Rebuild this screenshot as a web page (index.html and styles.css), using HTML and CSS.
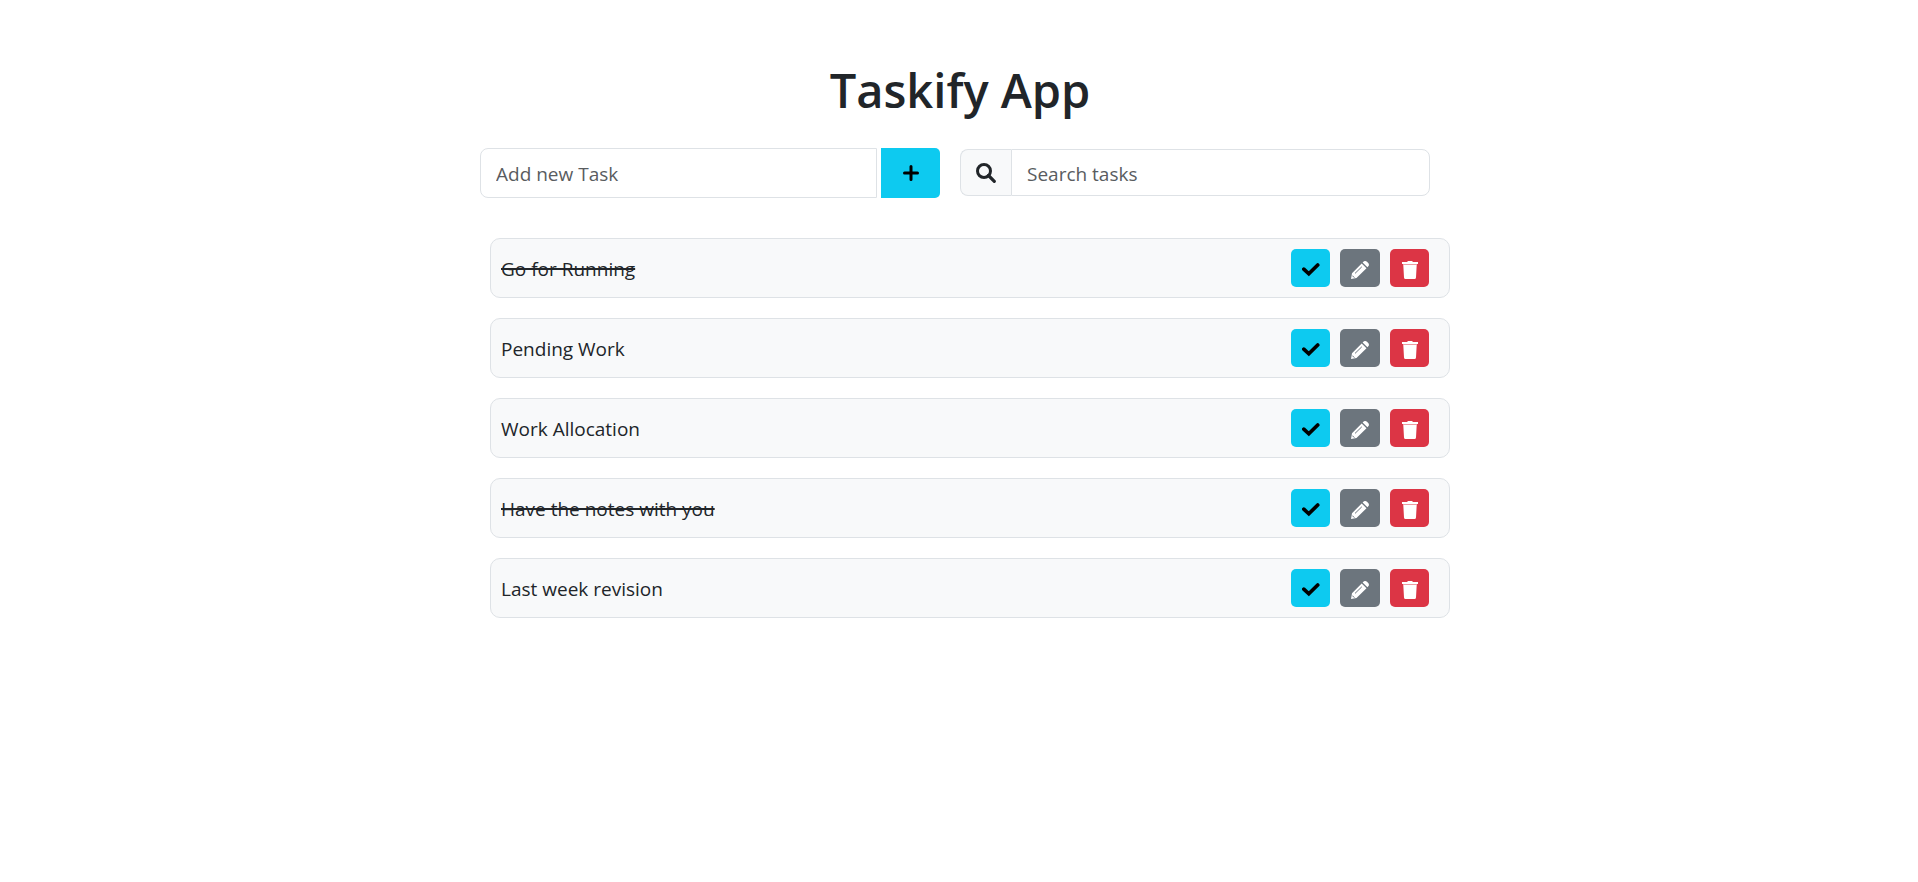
FILE: index.html
```html
<!DOCTYPE html>
<html lang="en">
<head>
<meta charset="utf-8">
<title>Taskify App</title>
<link rel="stylesheet" href="styles.css">
</head>
<body>
<svg class="sprite" aria-hidden="true">
  <symbol id="check" viewBox="0 0 18 18"><path d="M1.800 8.200 6.800 12.800 15.700 4" fill="none" stroke="currentColor" stroke-width="3.700" stroke-linecap="round"/></symbol>
  <symbol id="pencil" viewBox="0 0 18 18"><path fill="currentColor" d="M11.600 1.600 13 .3Q14.500-.5 16 .8L17.200 2Q18.500 3.500 17.500 5L16.400 6.200ZM10.700 2.500 15.500 7.300 5.500 17 0 18 1 12.200Z"/><path d="M4 12.400 10.800 5.800M1.300 14.600 3.400 16.700" fill="none" stroke="#6c757d" stroke-width="1"/></symbol>
  <symbol id="trash" viewBox="0 0 18 18"><path fill="currentColor" d="M1 1H6L7 0H11L12 1H17V3H1ZM2.300 4H15.700L15 16.500Q14.900 18 13.500 18H4.500Q3.100 18 3 16.500Z"/><path fill="currentColor" opacity=".5" d="M2 3H16V4H2Z"/></symbol>
</svg>
<main class="app">
  <h1 class="title">Taskify App</h1>
  <div class="toolbar">
    <form class="add">
      <input class="field add-field" type="text" placeholder="Add new Task" aria-label="Add new Task">
      <button class="add-button" type="button" aria-label="Add task"><svg class="icon" viewBox="0 0 18 18"><path d="M9 2.500V15.500M2.500 9H15.500" fill="none" stroke="currentColor" stroke-width="3" stroke-linecap="round"/></svg></button>
    </form>
    <form class="search">
      <label class="search-label" for="search" aria-label="Search"><svg class="search-icon" viewBox="0 0 20 20"><circle cx="8" cy="8" r="6.500" fill="none" stroke="currentColor" stroke-width="3"/><path d="M12.500 12.500 18.300 18.300" stroke="currentColor" stroke-width="3.200" stroke-linecap="round"/></svg></label>
      <input class="field search-field" id="search" type="text" placeholder="Search tasks">
    </form>
  </div>
  <ul class="tasks">
    <li class="task"><span class="name done">Go for Running</span><div class="actions"><button class="action check" aria-label="Complete"><svg class="icon"><use href="#check"/></svg></button><button class="action edit" aria-label="Edit"><svg class="icon"><use href="#pencil"/></svg></button><button class="action delete" aria-label="Delete"><svg class="icon"><use href="#trash"/></svg></button></div></li>
    <li class="task"><span class="name">Pending Work</span><div class="actions"><button class="action check" aria-label="Complete"><svg class="icon"><use href="#check"/></svg></button><button class="action edit" aria-label="Edit"><svg class="icon"><use href="#pencil"/></svg></button><button class="action delete" aria-label="Delete"><svg class="icon"><use href="#trash"/></svg></button></div></li>
    <li class="task"><span class="name">Work Allocation</span><div class="actions"><button class="action check" aria-label="Complete"><svg class="icon"><use href="#check"/></svg></button><button class="action edit" aria-label="Edit"><svg class="icon"><use href="#pencil"/></svg></button><button class="action delete" aria-label="Delete"><svg class="icon"><use href="#trash"/></svg></button></div></li>
    <li class="task"><span class="name done">Have the notes with you</span><div class="actions"><button class="action check" aria-label="Complete"><svg class="icon"><use href="#check"/></svg></button><button class="action edit" aria-label="Edit"><svg class="icon"><use href="#pencil"/></svg></button><button class="action delete" aria-label="Delete"><svg class="icon"><use href="#trash"/></svg></button></div></li>
    <li class="task"><span class="name">Last week revision</span><div class="actions"><button class="action check" aria-label="Complete"><svg class="icon"><use href="#check"/></svg></button><button class="action edit" aria-label="Edit"><svg class="icon"><use href="#pencil"/></svg></button><button class="action delete" aria-label="Delete"><svg class="icon"><use href="#trash"/></svg></button></div></li>
  </ul>
</main>
</body>
</html>
```
FILE: styles.css
```css
* { box-sizing: border-box; }
body { margin: 0; padding-left: 2px; background: #fff; color: #212529; font: 19px/30px "Segoe UI", "Open Sans", sans-serif; }
.sprite { display: none; }
.app { width: calc(50% + 2px); margin: 0 auto; padding-top: 60px; }
.title { margin: 0 0 28px; font-size: 47px; line-height: 60px; font-weight: 600; text-align: center; }
.toolbar { display: grid; grid-template-columns: 1fr 1fr; align-items: start; margin-bottom: 40px; }
.add { display: flex; gap: 4px; padding-right: 20px; }
.search { display: flex; padding: 1px 10px 0 0; }
.field { flex: 1; min-width: 0; height: 50px; padding: 1px 15px 0; border: 1px solid #dee2e6; background: #fff; color: #212529; font: inherit; }
.field::placeholder { color: #595c5f; opacity: 1; }
.add-field { border-radius: 8px 0 0 8px; }
.add-button { display: flex; align-items: center; justify-content: center; width: 59px; padding: 0; border: 0; border-radius: 0 5px 5px 0; background: #0dcaf0; color: #000; }
.search-label { display: flex; align-items: center; justify-content: center; width: 51px; border: 1px solid #dee2e6; border-right: 0; border-radius: 8px 0 0 8px; background: #f8f9fa; }
.search-field { height: 47px; padding-top: 2px; border-radius: 0 8px 8px 0; }
.icon { display: block; width: 18px; height: 18px; }
.search-icon { display: block; width: 20px; height: 20px; }
.tasks { display: grid; gap: 20px; margin: 0 -10px 0 10px; padding: 0; list-style: none; }
.task { display: flex; align-items: center; justify-content: space-between; min-height: 60px; padding: 0 20px 0 10px; border: 1px solid #dee2e6; border-radius: 10px; background: #f8f9fa; }
.name { padding-top: 2px; }
.done { text-decoration: line-through; text-decoration-thickness: 2px; }
.actions { display: flex; gap: 10px; }
.action { display: flex; align-items: center; justify-content: center; width: 39px; height: 38px; padding: 4px 0 0; border: 0; border-radius: 5px; color: #fff; }
.check { background: #0dcaf0; color: #000; }
.edit { width: 40px; background: #6c757d; }
.delete { background: #dc3545; }
```
